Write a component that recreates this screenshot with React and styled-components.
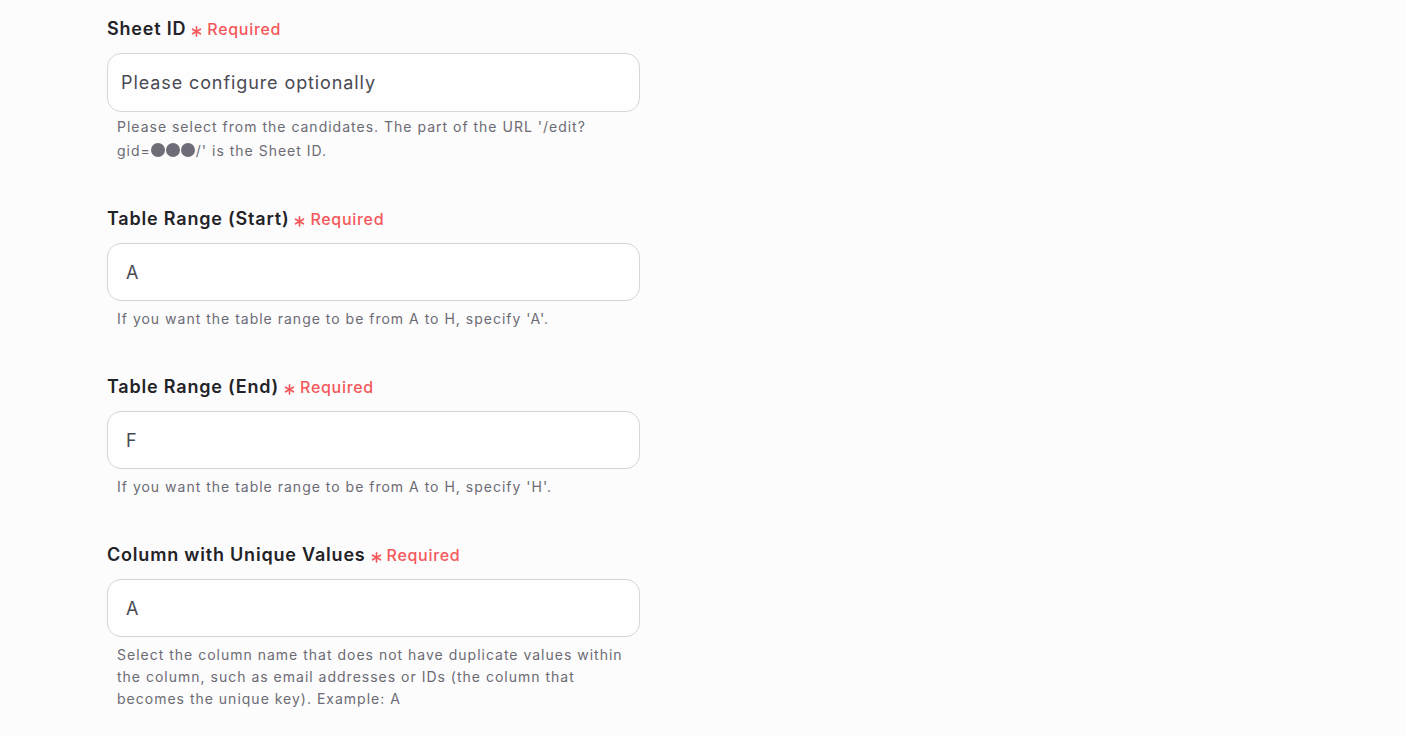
import React from "react";
import styled, { createGlobalStyle } from "styled-components";

const Global = createGlobalStyle`
  html, body { margin: 0; padding: 0; background: #fcfcfd; }
  body { font-family: Inter, "Noto Sans", sans-serif; -webkit-font-smoothing: antialiased; }
`;

const Page = styled.div`
  padding: 16px 0 0 107px;
  width: 533px;
  display: flex;
  flex-direction: column;
  gap: 44px;
`;

const Field = styled.div`
  display: flex;
  flex-direction: column;
`;

const LabelRow = styled.div`
  display: flex;
  align-items: center;
  gap: 5px;
  height: 24px;
  margin-bottom: 13px;
`;

const Label = styled.label`
  font-size: 18px;
  font-weight: 600;
  color: #232327;
  letter-spacing: 0.8px;
`;

const Required = styled.span`
  display: inline-flex;
  align-items: center;
  gap: 5px;
  color: #f4585a;
  font-size: 16px;
  font-weight: 500;
  letter-spacing: 0.7px;
  padding-top: 2px;
`;

const Input = styled.div`
  box-sizing: border-box;
  height: ${(p) => p.$h || 58}px;
  border: 1px solid #d6d5dc;
  border-radius: 14px;
  background: #fefefe;
  display: flex;
  align-items: center;
  padding-left: ${(p) => p.$pad || 18}px;
  font-size: 18px;
  color: #4a4a52;
  letter-spacing: 0.9px;
`;

const Help = styled.div`
  margin-top: ${(p) => p.$mt || 7}px;
  padding: 0 10px;
  font-size: 14px;
  line-height: ${(p) => p.$lh || 22}px;
  color: #6c6b74;
  letter-spacing: 1px;
`;

const NoWrap = styled.span`
  white-space: nowrap;
`;

const Dot = styled.span`
  display: inline-block;
  width: 14px;
  height: 14px;
  border-radius: 50%;
  background: #6e6d77;
  margin: 0 0.5px;
  vertical-align: -1px;
`;

const Star = () => (
  <svg width="11" height="11" viewBox="0 0 12 12" style={{ marginTop: 4 }}>
    <g stroke="#f4585a" strokeWidth="1.8" strokeLinecap="round">
      <line x1="6" y1="1" x2="6" y2="11" />
      <line x1="1.7" y1="3.5" x2="10.3" y2="8.5" />
      <line x1="1.7" y1="8.5" x2="10.3" y2="3.5" />
    </g>
  </svg>
);

const FieldBlock = ({ label, value, help, pad, h, mt, lh }) => (
  <Field>
    <LabelRow>
      <Label>{label}</Label>
      <Required>
        <Star />
        Required
      </Required>
    </LabelRow>
    <Input $pad={pad} $h={h}>{value}</Input>
    <Help $mt={mt} $lh={lh}>{help}</Help>
  </Field>
);

export default function App() {
  return (
    <>
      <Global />
      <Page>
        <FieldBlock
          label="Sheet ID"
          value="Please configure optionally"
          pad={13}
          h={59}
          mt={3}
          lh={23.5}
          help={
            <>
              Please select from the candidates. The part of the URL '/edit?{" "}
              <NoWrap>
                gid=<Dot />
                <Dot />
                <Dot />/'
              </NoWrap>{" "}
              is the Sheet ID.
            </>
          }
        />
        <FieldBlock
          label="Table Range (Start)"
          value="A"
          help="If you want the table range to be from A to H, specify 'A'."
        />
        <FieldBlock
          label="Table Range (End)"
          value="F"
          help="If you want the table range to be from A to H, specify 'H'."
        />
        <FieldBlock
          label="Column with Unique Values"
          value="A"
          help="Select the column name that does not have duplicate values within the column, such as email addresses or IDs (the column that becomes the unique key). Example: A"
        />
      </Page>
    </>
  );
}
